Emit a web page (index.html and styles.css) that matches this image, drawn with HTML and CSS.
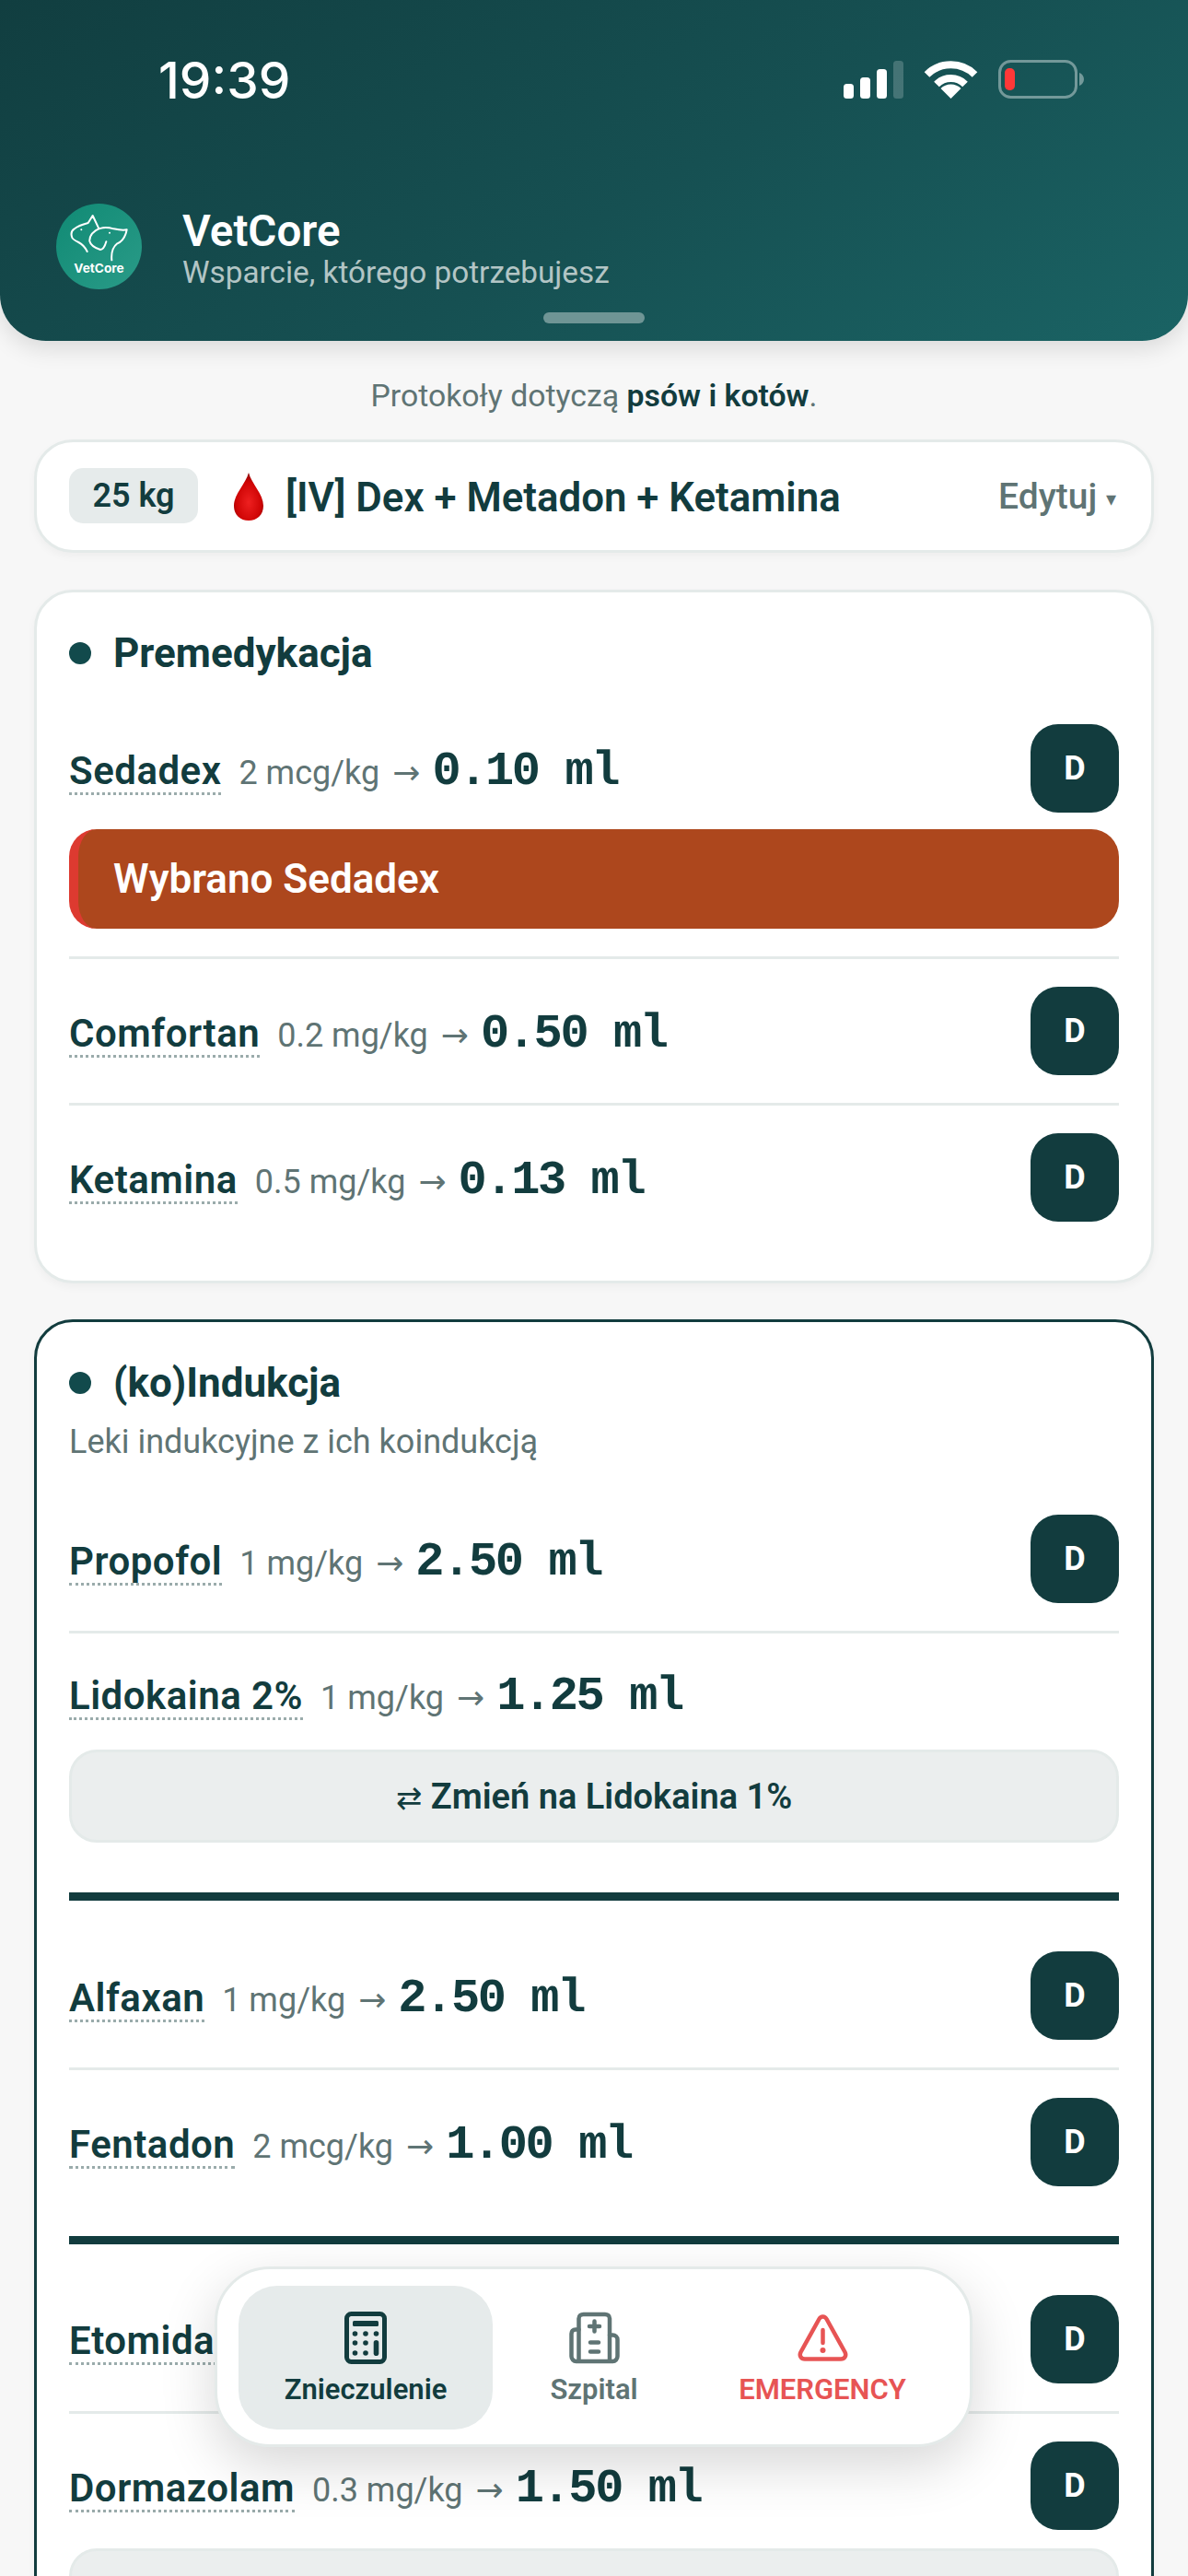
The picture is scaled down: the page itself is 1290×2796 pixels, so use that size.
FILE: index.html
```html
<!DOCTYPE html>
<html lang="pl">
<head>
  <meta charset="UTF-8">
  <title>VetCore</title>
  <link rel="stylesheet" href="styles.css">
</head>
<body>
  <div class="screen">
    <header class="header">
      <div class="status-bar">
        <div class="time">19:39</div>
        <svg class="status-icons" viewBox="0 0 261 42" width="261" height="42">
          <rect x="0" y="26" width="11" height="16" rx="3.5" fill="#fff"/>
          <rect x="18" y="19" width="11" height="23" rx="3.5" fill="#fff"/>
          <rect x="36" y="10" width="11" height="32" rx="3.5" fill="#fff"/>
          <rect x="54" y="1" width="11" height="41" rx="3.5" fill="#fff" opacity="0.2"/>
          <path d="M90.5 16A37 37 0 0 1 142.5 16M101 26.5A22 22 0 0 1 132 26.5" fill="none" stroke="#fff" stroke-width="8"/>
          <path d="M116.5 42L105.5 31A15.5 15.5 0 0 1 127.5 31Z" fill="#fff"/>
          <rect x="169.5" y="1.5" width="83" height="39" rx="12" fill="none" stroke="#fff" stroke-opacity="0.4" stroke-width="3"/>
          <rect x="175" y="9" width="11" height="24" rx="5" fill="#ff3838"/>
          <path d="M256 14C259 15 261 18 261 21C261 24 259 27 256 28Z" fill="#fff" fill-opacity="0.4"/>
        </svg>
      </div>
      <div class="brand">
        <svg class="logo" viewBox="124 62 279 279" width="93" height="93">
          <defs>
            <linearGradient id="logo-bg" x1="0" y1="0" x2="1" y2="1">
              <stop offset="0" stop-color="#108a74"/>
              <stop offset="1" stop-color="#2a9b88"/>
            </linearGradient>
          </defs>
          <circle cx="263.5" cy="201.5" r="139.5" fill="url(#logo-bg)"/>
          <g fill="none" stroke="#fff" stroke-width="6" stroke-linecap="round" stroke-linejoin="round">
            <path d="M225 218C218 203 210 195 197 188C184 182 176 178 175 170C172 160 172 152 182 145C195 134 212 129 228 125L243 101L262 141"/>
            <path d="M305 246C303 225 308 204 323 192C338 186 350 168 354 147C340 150 325 147 311 144C292 138 268 139 252 150C238 160 232 172 233 184C236 197 250 206 268 212C278 212 283 200 287 186"/>
          </g>
          <circle cx="206" cy="147" r="3" fill="#fff"/>
          <circle cx="298" cy="157" r="3" fill="#fff"/>
          <text class="logo-text" x="263.5" y="286" text-anchor="middle">VetCore</text>
        </svg>
        <div class="brand-info">
          <div class="brand-name">VetCore</div>
          <div class="brand-sub">Wsparcie, którego potrzebujesz</div>
        </div>
      </div>
      <div class="handle"></div>
    </header>

    <main class="content">
      <p class="notice">Protokoły dotyczą <b>psów i kotów</b>.</p>

      <div class="card summary">
        <div class="weight">25 kg</div>
        <svg class="drop" viewBox="0 0 34 54" width="34" height="54">
          <defs>
            <radialGradient id="drop-fill" cx="0.5" cy="0.62" r="0.6">
              <stop offset="0" stop-color="#ee2020"/>
              <stop offset="0.7" stop-color="#cf0505"/>
              <stop offset="1" stop-color="#8d0303"/>
            </radialGradient>
          </defs>
          <path d="M17 1C20 13 33 24 33 37C33 47 26 53 17 53C8 53 1 47 1 37C1 24 14 13 17 1Z" fill="url(#drop-fill)"/>
        </svg>
        <div class="protocol">[IV] Dex + Metadon + Ketamina</div>
        <div class="edit">Edytuj <span class="caret">▾</span></div>
      </div>

      <section class="card section">
        <h3 class="section-title">Premedykacja</h3>
        <div class="row">
          <div class="drug-line">
            <div class="drug"><span class="name">Sedadex</span><span class="dose">2 mcg/kg</span><span class="arrow">→</span><span class="vol">0.10 ml</span></div>
            <button class="dose-btn">D</button>
          </div>
          <div class="selected">Wybrano Sedadex</div>
        </div>
        <div class="row">
          <div class="drug-line">
            <div class="drug"><span class="name">Comfortan</span><span class="dose">0.2 mg/kg</span><span class="arrow">→</span><span class="vol">0.50 ml</span></div>
            <button class="dose-btn">D</button>
          </div>
        </div>
        <div class="row last">
          <div class="drug-line">
            <div class="drug"><span class="name">Ketamina</span><span class="dose">0.5 mg/kg</span><span class="arrow">→</span><span class="vol">0.13 ml</span></div>
            <button class="dose-btn">D</button>
          </div>
        </div>
      </section>

      <section class="card section active">
        <h3 class="section-title">(ko)Indukcja</h3>
        <p class="section-sub">Leki indukcyjne z ich koindukcją</p>
        <div class="row">
          <div class="drug-line">
            <div class="drug"><span class="name">Propofol</span><span class="dose">1 mg/kg</span><span class="arrow">→</span><span class="vol">2.50 ml</span></div>
            <button class="dose-btn">D</button>
          </div>
        </div>
        <div class="row last swap-row">
          <div class="drug"><span class="name">Lidokaina 2%</span><span class="dose">1 mg/kg</span><span class="arrow">→</span><span class="vol">1.25 ml</span></div>
          <button class="swap"><span class="swap-icon">⇄</span> Zmień na Lidokaina 1%</button>
        </div>
        <div class="group-bar"></div>
        <div class="row">
          <div class="drug-line">
            <div class="drug"><span class="name">Alfaxan</span><span class="dose">1 mg/kg</span><span class="arrow">→</span><span class="vol">2.50 ml</span></div>
            <button class="dose-btn">D</button>
          </div>
        </div>
        <div class="row last">
          <div class="drug-line">
            <div class="drug"><span class="name">Fentadon</span><span class="dose">2 mcg/kg</span><span class="arrow">→</span><span class="vol">1.00 ml</span></div>
            <button class="dose-btn">D</button>
          </div>
        </div>
        <div class="group-bar"></div>
        <div class="row">
          <div class="drug-line">
            <div class="drug"><span class="name">Etomidat</span></div>
            <button class="dose-btn">D</button>
          </div>
        </div>
        <div class="row last">
          <div class="drug-line">
            <div class="drug"><span class="name">Dormazolam</span><span class="dose">0.3 mg/kg</span><span class="arrow">→</span><span class="vol">1.50 ml</span></div>
            <button class="dose-btn">D</button>
          </div>
          <button class="swap blank"></button>
        </div>
      </section>
    </main>

    <nav class="tabbar">
      <div class="tab current">
        <svg viewBox="0 0 46 57" width="46" height="57">
          <rect x="2.5" y="2.5" width="41" height="52" rx="5" fill="none" stroke="currentColor" stroke-width="5"/>
          <rect x="9" y="10" width="28" height="6" rx="1.5" fill="currentColor"/>
          <g fill="currentColor">
            <circle cx="11.5" cy="24" r="2.8"/><circle cx="23" cy="24" r="2.8"/><circle cx="34.5" cy="24" r="2.8"/>
            <circle cx="11.5" cy="34" r="2.8"/><circle cx="23" cy="34" r="2.8"/>
            <circle cx="11.5" cy="45" r="2.8"/><circle cx="23" cy="45" r="2.8"/>
            <rect x="31.7" y="31" width="5.6" height="17" rx="2.8"/>
          </g>
        </svg>
        <span>Znieczulenie</span>
      </div>
      <div class="tab">
        <svg viewBox="0 0 55 56" width="55" height="56">
          <g fill="none" stroke="currentColor" stroke-width="4.5" stroke-linecap="round" stroke-linejoin="round">
            <path d="M10.5 53V7C10.5 4 13 2.5 15.5 2.5H39C41.5 2.5 44 4 44 7V53"/>
            <path d="M10.5 19H7C4 19 2.5 21 2.5 23.5V48C2.5 51 5 53.5 7.5 53.5H47.5C50 53.5 52.5 51 52.5 48V30C52.5 27 50 25 47.5 25H44"/>
            <path d="M27.5 10V21M22 15.5H33"/>
            <path d="M23 33H32M23 43H32"/>
          </g>
        </svg>
        <span>Szpital</span>
      </div>
      <div class="tab danger">
        <svg viewBox="0 0 55 51" width="55" height="51">
          <path d="M23.5 5L3.5 41C1.5 45 4 48.5 8 48.5H47C51 48.5 53.5 45 51.5 41L31.5 5C29.5 1.5 25.5 1.5 23.5 5Z" fill="none" stroke="currentColor" stroke-width="4.5" stroke-linejoin="round"/>
          <path d="M27.5 17V31" stroke="currentColor" stroke-width="4.5" stroke-linecap="round"/>
          <circle cx="27.5" cy="39" r="3" fill="currentColor"/>
        </svg>
        <span>EMERGENCY</span>
      </div>
    </nav>
  </div>
</body>
</html>
```

FILE: styles.css
```css
* {
  box-sizing: border-box;
}

html, body {
  margin: 0;
  padding: 0;
}

body {
  background: #f7f7f7;
  color: #123c3e;
  font-family: Roboto, 'Noto Sans', sans-serif;
}

.screen {
  position: relative;
  width: 1290px;
  height: 2796px;
  overflow: hidden;
}

.header {
  position: relative;
  height: 370px;
  padding: 0 61px;
  background: linear-gradient(150deg, #113e40 0%, #165052 55%, #1a6364 100%);
  border-radius: 0 0 50px 50px;
  box-shadow: 0 8px 26px rgba(0, 0, 0, 0.12);
  color: white;
}

.status-bar {
  display: flex;
  justify-content: space-between;
  align-items: flex-start;
  height: 221px;
  padding: 57px 52px 0 111px;
}

.time {
  font-family: Inter, sans-serif;
  font-size: 55px;
  line-height: 60px;
  font-weight: 500;
}

.status-icons {
  margin-top: 8px;
}

.brand {
  display: flex;
  align-items: flex-start;
  gap: 44px;
}

.logo-text {
  font-family: Inter, sans-serif;
  font-size: 41px;
  font-weight: 700;
  fill: white;
}

.brand-name {
  margin-top: 4px;
  font-size: 47.5px;
  line-height: 52px;
  font-weight: 600;
}

.brand-sub {
  font-size: 33.3px;
  line-height: 38px;
  color: #b3c5c5;
}

.handle {
  position: absolute;
  left: 590px;
  top: 339px;
  width: 110px;
  height: 12px;
  border-radius: 6px;
  background: #6f9595;
}

.content {
  padding: 0 37px;
}

.notice {
  margin: 41px 0 0;
  font-size: 33.8px;
  line-height: 38px;
  text-align: center;
  color: #5f7474;
}

.notice b {
  color: #123c3e;
  font-weight: 600;
}

.card {
  background: white;
  border: 3px solid #e4eae9;
  border-radius: 42px;
  box-shadow: 0 4px 10px rgba(0, 0, 0, 0.04);
}

.summary {
  display: flex;
  align-items: center;
  height: 123px;
  margin-top: 28px;
  padding: 0 35px;
}

.weight {
  width: 140px;
  height: 60px;
  margin-top: -2px;
  border-radius: 15px;
  background: #e6ebeb;
  font-size: 36px;
  line-height: 60px;
  font-weight: 600;
  text-align: center;
}

.drop {
  margin: 0 23px 0 38px;
}

.protocol {
  flex: 1;
  padding-top: 2px;
  font-size: 43.8px;
  font-weight: 600;
}

.edit {
  margin-right: 3px;
  font-size: 39px;
  font-weight: 500;
  color: #5f7474;
}

.caret {
  font-size: 22px;
  vertical-align: 3px;
}

.section {
  margin-top: 40px;
  padding: 41px 35px 34px;
}

.section.active {
  margin-top: 39px;
  border-color: #123c3e;
}

.section-title {
  position: relative;
  margin: 0 0 22px;
  padding-left: 48px;
  font-size: 44px;
  line-height: 50px;
  font-weight: 700;
}

.section-title::before {
  content: "";
  position: absolute;
  left: 0;
  top: 13px;
  width: 24px;
  height: 24px;
  border-radius: 50%;
  background: #124a4c;
}

.section-sub {
  margin: -6px 0 26px;
  font-size: 36px;
  line-height: 46px;
  color: #5f7474;
}

.row {
  padding: 30px 0;
  border-bottom: 3px solid #e4eae9;
}

.row.last {
  border-bottom: none;
}

.drug-line {
  display: flex;
  justify-content: space-between;
  align-items: center;
}

.drug {
  display: flex;
  align-items: baseline;
  white-space: nowrap;
  padding-top: 7px;
}

.name {
  font-size: 42px;
  font-weight: 600;
  letter-spacing: 0.5px;
  border-bottom: 3px dotted #9aabab;
  line-height: 46px;
}

.dose {
  margin-left: 19px;
  font-size: 36px;
  color: #5f7474;
}

.arrow {
  margin-left: 14px;
  font-family: 'DejaVu Sans', sans-serif;
  font-size: 36px;
  line-height: 36px;
  color: #5f7474;
}

.vol {
  margin-left: 13px;
  font-family: 'Liberation Mono', 'DejaVu Sans Mono', monospace;
  font-size: 52px;
  letter-spacing: -2.4px;
  font-weight: 700;
}

.dose-btn {
  width: 96px;
  height: 96px;
  padding: 0;
  border: none;
  border-radius: 30px;
  background: #123c3e;
  color: white;
  font-family: Roboto, sans-serif;
  font-size: 36px;
  font-weight: 700;
}

.selected {
  height: 108px;
  margin-top: 18px;
  padding-left: 38px;
  border-left: 10px solid #dd3a30;
  border-radius: 30px;
  background: #ad471d;
  color: white;
  font-size: 44px;
  line-height: 108px;
  font-weight: 600;
}

.swap-row {
  padding-top: 32px;
}

.swap {
  display: block;
  width: 100%;
  height: 101px;
  margin-top: 28px;
  padding: 0;
  border: 3px solid #e4eae9;
  border-radius: 30px;
  background: #ebeeee;
  color: #123c3e;
  font-family: Roboto, sans-serif;
  font-size: 38px;
  font-weight: 600;
}

.swap.blank {
  margin-top: 20px;
}

.swap-icon {
  font-family: 'DejaVu Sans', sans-serif;
  font-weight: 400;
  font-size: 34px;
}

.group-bar {
  height: 9px;
  margin: 24px 0 25px;
  background: #123c3e;
}

.tabbar {
  position: absolute;
  left: 233px;
  top: 2460px;
  display: flex;
  width: 823px;
  height: 196px;
  padding: 18px 22px 18px 23px;
  background: white;
  border: 3px solid #e4eae9;
  border-radius: 60px;
  box-shadow: 0 20px 60px rgba(0, 0, 0, 0.16);
}

.tab {
  display: flex;
  flex-direction: column;
  align-items: center;
  flex: 0 0 276px;
  height: 156px;
  margin-left: -28px;
  padding-top: 28px;
  border-radius: 42px;
  color: #5f7474;
  font-size: 31px;
  line-height: 36px;
  font-weight: 600;
}

.tab svg {
  height: 57px;
}

.tab span {
  margin-top: 10px;
}

.tab.current {
  margin-left: 0;
  background: #e6ebeb;
  color: #123c3e;
}

.tab.danger {
  color: #e75454;
}
```
